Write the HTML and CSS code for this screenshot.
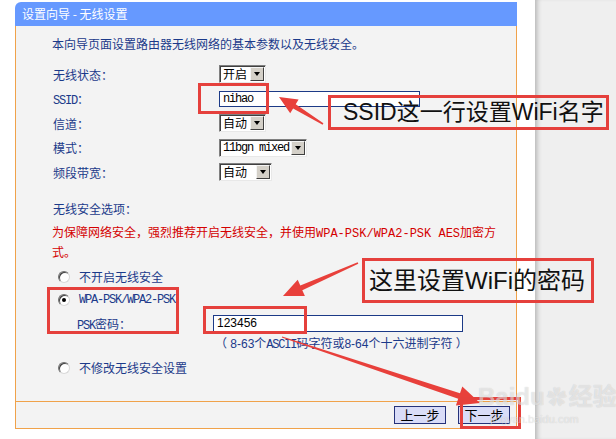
FILE: index.html
```html
<!DOCTYPE html>
<html lang="zh-CN">

<head>
    <meta charset="UTF-8">
    <title>设置向导 - 无线设置</title>
    <link rel="stylesheet" href="styles.css">
</head>

<body>
    <div class="screen">
        <div class="sheet">
            <div class="panel">
                <div class="panel-head">设置向导&nbsp;-&nbsp;无线设置</div>
                <div class="panel-body">
                    <p class="intro">本向导页面设置路由器无线网络的基本参数以及无线安全。</p>

                    <div class="form">
                        <div class="row">
                            <span class="label">无线状态：</span>
                            <span class="select w-on"><span class="val">开启</span><span class="drop"></span></span>
                        </div>
                        <div class="row">
                            <span class="label"><span class="latin">SSID</span>：</span>
                            <span class="input ssid latin">nihao</span>
                        </div>
                        <div class="row">
                            <span class="label">信道：</span>
                            <span class="select w-on"><span class="val">自动</span><span class="drop"></span></span>
                        </div>
                        <div class="row">
                            <span class="label">模式：</span>
                            <span class="select w-mode"><span class="val latin">11bgn mixed</span><span class="drop"></span></span>
                        </div>
                        <div class="row">
                            <span class="label">频段带宽：</span>
                            <span class="select w-band"><span class="val">自动</span><span class="drop"></span></span>
                        </div>
                    </div>

                    <p class="section-title">无线安全选项：</p>
                    <p class="warn">为保障网络安全，强烈推荐开启无线安全，并使用<span class="mono">WPA-PSK/WPA2-PSK AES</span>加密方式。</p>

                    <div class="radio-row first"><span class="radio"></span>不开启无线安全</div>
                    <div class="radio-row"><span class="radio checked"></span><span class="latin">WPA-PSK/WPA2-PSK</span></div>
                    <div class="psk-row">
                        <span class="psk-label"><span class="latin">PSK</span>密码：</span>
                        <span class="input psk">123456</span>
                    </div>
                    <p class="hint">（ 8-63个<span class="latin">ASCII</span>码字符或8-64个十六进制字符 ）</p>
                    <div class="radio-row last"><span class="radio"></span>不修改无线安全设置</div>
                </div>
                <div class="panel-foot">
                    <button class="btn">上一步</button>
                    <button class="btn">下一步</button>
                </div>
            </div>
        </div>
        <div class="side"></div>
    </div>

    <!-- annotations drawn over the screenshot -->
    <svg class="arrows" width="616" height="439" viewBox="0 0 616 439">
        <polygon points="279,97 298.6,99.6 295.7,104.3 323.4,123.3 322.6,124.7 293.1,108.5 290.2,113.2" />
        <polygon points="283,296 304.9,296.1 302.3,290.2 358.3,263.7 357.7,262.3 300.3,285.6 297.7,279.7" />
        <polygon points="480,403 455.9,405.5 458.2,398.8 281.8,337.6 282.2,336.4 460,393.2 462.3,386.5" />
    </svg>
    <div class="mark box-ssid"></div>
    <div class="mark box-wpa"></div>
    <div class="mark box-psk"></div>
    <div class="mark box-next"></div>
    <div class="note note-ssid">SSID这一行设置WiFi名字</div>
    <div class="note note-psk">这里设置WiFi的密码</div>

    <div class="watermark">
        <div class="wm-logo">Baidu<span class="paw">&#10047;</span>经验</div>
        <div class="wm-url">jingyan.baidu.com</div>
    </div>
</body>

</html>
```

FILE: styles.css
```css
body {
    margin: 0;
    width: 616px;
    height: 439px;
    overflow: hidden;
    position: relative;
    background-color: #fff;
    font-family: "Noto Sans CJK SC", "Liberation Sans", sans-serif;
    font-size: 12px;
    color: #1b3a8a;
}

p {
    margin: 0;
}

.screen {
    display: flex;
    height: 439px;
}

.sheet {
    width: 535px;
    background-color: #fff;
}

.side {
    flex: 1;
    background-color: #efefef;
    box-shadow: inset 5px 0 5px -3px rgba(0, 0, 0, 0.25);
}

.latin,
.mono {
    font-family: "Liberation Mono", "Noto Sans CJK SC", monospace;
}

.latin {
    letter-spacing: -1.2px;
}

/* panel */
.panel {
    margin: 2px 0 0 15px;
    width: 502px;
}

.panel-head {
    height: 24px;
    line-height: 24px;
    padding-left: 7px;
    background-color: #6699ff;
    color: #fff;
    border-top-left-radius: 6px;
}

.panel-body {
    height: 365px;
    padding: 10px 11px 0 36px;
    background-color: #f3f3f3;
    border-left: 1px solid #f0a24a;
    border-right: 1px solid #f0a24a;
}

.intro {
    line-height: 16px;
}

.form {
    margin-top: 10px;
}

.row {
    display: flex;
    align-items: center;
    height: 24.5px;
    padding-left: 1px;
}

.label {
    width: 166px;
}

/* old style select */
.select {
    display: inline-flex;
    align-items: center;
    height: 14px;
    padding: 1px;
    background-color: #fff;
    border: 1px solid;
    border-color: #808080 #e8e8e8 #e8e8e8 #808080;
    box-shadow: inset 1px 1px 0 #404040;
    color: #000;
}

.select .val {
    flex: 1;
    padding-left: 2px;
    line-height: 14px;
}

.drop {
    position: relative;
    width: 12px;
    height: 12px;
    background-color: #d4d0c8;
    border: 1px solid;
    border-color: #f4f4f4 #404040 #404040 #f4f4f4;
}

.drop::after {
    content: "";
    position: absolute;
    left: 3px;
    top: 4px;
    border-left: 3px solid transparent;
    border-right: 3px solid transparent;
    border-top: 4px solid #000;
}

.w-on {
    width: 43px;
}

.w-mode {
    width: 84px;
}

.w-band {
    width: 49px;
}

.w-band .drop {
    margin-left: 4px;
}

.input {
    display: inline-block;
    height: 15px;
    line-height: 15px;
    padding-left: 3px;
    background-color: #fff;
    border: 1px solid #1c3a87;
    color: #000;
    box-sizing: border-box;
}

.ssid {
    width: 201px;
    height: 16px;
}

.psk {
    width: 250px;
    height: 17px;
    font-family: "Liberation Sans", sans-serif;
}

.section-title {
    margin-top: 16px;
    line-height: 16px;
    padding-left: 1px;
}

.warn {
    margin-top: 6px;
    line-height: 17px;
    color: #d40000;
}

.radio-row {
    display: flex;
    align-items: center;
    gap: 9px;
    height: 23px;
    padding-left: 6px;
}

.radio-row.first {
    margin-top: 5px;
    height: 24px;
}

.radio-row.last {
    margin-top: 3px;
    height: 24px;
}

.radio {
    position: relative;
    width: 10px;
    height: 10px;
    border-radius: 50%;
    background-color: #fff;
    border: 1px solid;
    border-color: #707070 #d8d8d8 #d8d8d8 #707070;
    box-shadow: inset 1px 1px 0 #404040;
}

.radio.checked::after {
    content: "";
    position: absolute;
    left: 3px;
    top: 3px;
    width: 4px;
    height: 4px;
    border-radius: 50%;
    background-color: #000;
}

.psk-row {
    display: flex;
    align-items: center;
    height: 24px;
    padding-left: 25px;
}

.psk-label {
    width: 136px;
}

.hint {
    margin-top: 0;
    line-height: 16px;
    padding-left: 163px;
    font-family: "Liberation Sans", "Noto Sans CJK SC", sans-serif;
}

.panel-foot {
    display: flex;
    justify-content: flex-end;
    gap: 12px;
    height: 26px;
    padding: 0 6px 0 0;
    align-items: center;
    background-color: #f3f3f3;
    border: 1px solid #f0a24a;
}

.btn {
    width: 52px;
    height: 18px;
    padding: 0;
    font-family: "Noto Sans CJK SC", sans-serif;
    font-size: 13px;
    line-height: 16px;
    color: #000;
    background-color: #d9dcf7;
    border: 1px solid #24317a;
}

/* annotations */
.arrows {
    position: absolute;
    left: 0;
    top: 0;
}

.arrows polygon {
    fill: #e8403b;
}

.mark,
.note {
    position: absolute;
    border: 3px solid #e5403c;
    box-sizing: border-box;
}

.box-ssid {
    left: 198px;
    top: 83px;
    width: 71px;
    height: 31px;
}

.box-wpa {
    left: 47px;
    top: 287px;
    width: 132px;
    height: 47px;
}

.box-psk {
    left: 203px;
    top: 306px;
    width: 104px;
    height: 28px;
}

.box-next {
    left: 460px;
    top: 397px;
    width: 61px;
    height: 32px;
}

.note {
    font-family: "Liberation Sans", "Noto Sans CJK SC", sans-serif;
    color: #111;
    white-space: nowrap;
}

.note-ssid {
    left: 328px;
    top: 95px;
    width: 281px;
    height: 35px;
    padding-left: 12px;
    font-size: 23px;
    line-height: 29px;
}

.note-psk {
    left: 362px;
    top: 258px;
    width: 232px;
    height: 45px;
    padding-left: 4px;
    font-size: 24px;
    line-height: 39px;
}

.watermark {
    position: absolute;
    left: 478px;
    top: 382px;
    width: 136px;
    white-space: nowrap;
    color: rgba(255, 255, 255, 0.55);
    text-shadow: 0 0 1px rgba(0, 0, 0, 0.2);
    font-family: "Liberation Sans", "Noto Sans CJK SC", sans-serif;
}

.wm-logo {
    font-size: 24px;
    font-weight: bold;
    line-height: 30px;
}

.paw {
    font-size: 20px;
    margin: 0 2px;
}

.wm-url {
    margin-left: 12px;
    font-size: 11px;
    line-height: 12px;
}
```
